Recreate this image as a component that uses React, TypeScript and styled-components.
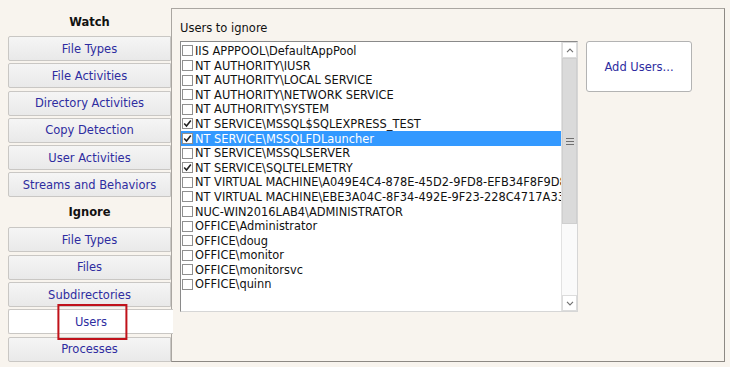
import React from "react";
import styled, { createGlobalStyle } from "styled-components";

const GlobalStyle = createGlobalStyle`
  html, body {
    margin: 0;
    padding: 0;
    background: #f8f4ee;
  }
  body {
    font-family: "DejaVu Sans", Verdana, sans-serif;
  }
`;

const Page = styled.div`
  display: flex;
  align-items: flex-start;
  padding: 8px 0 0 8px;
  width: 730px;
  height: 367px;
  box-sizing: border-box;
`;

const Nav = styled.nav`
  width: 163px;
  display: flex;
  flex-direction: column;
  flex-shrink: 0;
`;

const NavHeading = styled.div<{ $h: number }>`
  height: ${(p) => p.$h}px;
  display: flex;
  align-items: center;
  justify-content: center;
  font-weight: bold;
  font-size: 11.5px;
  color: #111;
`;

const TabList = styled.div`
  display: flex;
  flex-direction: column;
  gap: 2.3px;
`;

const Tab = styled.div<{ $active?: boolean }>`
  position: relative;
  height: 25px;
  box-sizing: border-box;
  display: flex;
  align-items: center;
  justify-content: center;
  font-size: 11.5px;
  color: #2e2ca0;
  border: 1px solid #c9c7c4;
  border-radius: 2px 0 0 2px;
  background: ${(p) =>
    p.$active ? "#ffffff" : "linear-gradient(#f5f5f5, #e9e9e9)"};
  ${(p) =>
    p.$active &&
    `
    border-right: none;
    margin-right: -2px;
    z-index: 1;
  `}
`;

const Annotation = styled.span`
  position: absolute;
  left: 50%;
  top: 50%;
  width: 70px;
  height: 36px;
  box-sizing: border-box;
  transform: translate(-48%, -50%);
  border: 2px solid #c0121a;
  pointer-events: none;
`;

const Panel = styled.section`
  width: 554px;
  height: 354px;
  box-sizing: border-box;
  border: 1px solid #aaa6a1;
  border-right-color: #8d8984;
  border-bottom-color: #8d8984;
  padding: 12px 0 0 8px;
  display: flex;
  flex-direction: column;
`;

const Label = styled.div`
  font-size: 11.5px;
  color: #111;
  height: 20px;
`;

const Body = styled.div`
  display: flex;
  align-items: flex-start;
  gap: 8px;
`;

const ListBox = styled.div`
  width: 398px;
  height: 271px;
  box-sizing: border-box;
  border: 1px solid #8a8a8a;
  border-right-color: #d6d6d6;
  border-bottom-color: #d6d6d6;
  background: #fff;
  display: flex;
`;

const Items = styled.div`
  flex: 1;
  overflow: hidden;
  padding-top: 1.7px;
`;

const Row = styled.div<{ $selected?: boolean }>`
  height: 14.6px;
  display: flex;
  align-items: center;
  gap: 2px;
  padding-left: 1px;
  white-space: nowrap;
  font-size: 11.4px;
  color: ${(p) => (p.$selected ? "#ffffff" : "#111")};
  background: ${(p) => (p.$selected ? "#3399ff" : "transparent")};
`;

const Check = styled.span`
  width: 11px;
  height: 11px;
  flex-shrink: 0;
  box-sizing: border-box;
  border: 1px solid #8f8f8f;
  background: #fff;
  display: flex;
  align-items: center;
  justify-content: center;
`;

const ScrollBar = styled.div`
  width: 16px;
  display: flex;
  flex-direction: column;
  background: #fafafa;
  border-left: 1px solid #e2e2e2;
  box-sizing: border-box;
`;

const Arrow = styled.div`
  height: 16px;
  box-sizing: border-box;
  border: 1px solid #dcdcdc;
  background: #fff;
  display: flex;
  align-items: center;
  justify-content: center;
`;

const Thumb = styled.div`
  height: 166px;
  background: #dadada;
  border: 1px solid #cfcfcf;
  box-sizing: border-box;
  display: flex;
  align-items: center;
  justify-content: center;
`;

const AddButton = styled.button`
  width: 106px;
  height: 51px;
  border: 1px solid #b3b3b3;
  border-radius: 3px;
  background: #fff;
  color: #2e2ca0;
  font-family: "DejaVu Sans", Verdana, sans-serif;
  font-size: 11.5px;
  padding: 0;
`;

type User = { name: string; checked?: boolean; selected?: boolean };

const users: User[] = [
  { name: "IIS APPPOOL\\DefaultAppPool" },
  { name: "NT AUTHORITY\\IUSR" },
  { name: "NT AUTHORITY\\LOCAL SERVICE" },
  { name: "NT AUTHORITY\\NETWORK SERVICE" },
  { name: "NT AUTHORITY\\SYSTEM" },
  { name: "NT SERVICE\\MSSQL$SQLEXPRESS_TEST", checked: true },
  { name: "NT SERVICE\\MSSQLFDLauncher", checked: true, selected: true },
  { name: "NT SERVICE\\MSSQLSERVER" },
  { name: "NT SERVICE\\SQLTELEMETRY", checked: true },
  { name: "NT VIRTUAL MACHINE\\A049E4C4-878E-45D2-9FD8-EFB34F8F9D86" },
  { name: "NT VIRTUAL MACHINE\\EBE3A04C-8F34-492E-9F23-228C4717A33B" },
  { name: "NUC-WIN2016LAB4\\ADMINISTRATOR" },
  { name: "OFFICE\\Administrator" },
  { name: "OFFICE\\doug" },
  { name: "OFFICE\\monitor" },
  { name: "OFFICE\\monitorsvc" },
  { name: "OFFICE\\quinn" },
];

const watchTabs = [
  "File Types",
  "File Activities",
  "Directory Activities",
  "Copy Detection",
  "User Activities",
  "Streams and Behaviors",
];

const ignoreTabs = ["File Types", "Files", "Subdirectories", "Users", "Processes"];

const Tick = () => (
  <svg width="9" height="9" viewBox="0 0 9 9">
    <polyline points="1.2,4.5 3.5,7 7.8,1.5" fill="none" stroke="#222" strokeWidth="1.6" />
  </svg>
);

const Chevron = ({ up }: { up?: boolean }) => (
  <svg width="8" height="5" viewBox="0 0 8 5">
    <polyline
      points={up ? "1,4.2 4,1 7,4.2" : "1,0.8 4,4 7,0.8"}
      fill="none"
      stroke="#707070"
      strokeWidth="1.1"
    />
  </svg>
);

const Grip = () => (
  <svg width="8" height="7" viewBox="0 0 8 7">
    <path d="M0 0.5H8M0 3.5H8M0 6.5H8" stroke="#707070" strokeWidth="1" />
  </svg>
);

export default function App() {
  return (
    <>
      <GlobalStyle />
      <Page>
        <Nav>
          <NavHeading $h={28}>Watch</NavHeading>
          <TabList>
            {watchTabs.map((t) => (
              <Tab key={t}>{t}</Tab>
            ))}
          </TabList>
          <NavHeading $h={30}>Ignore</NavHeading>
          <TabList>
            {ignoreTabs.map((t) => (
              <Tab key={t} $active={t === "Users"}>
                {t}
                {t === "Users" && <Annotation />}
              </Tab>
            ))}
          </TabList>
        </Nav>
        <Panel>
          <Label>Users to ignore</Label>
          <Body>
            <ListBox>
              <Items>
                {users.map((u) => (
                  <Row key={u.name} $selected={u.selected}>
                    <Check>{u.checked && <Tick />}</Check>
                    {u.name}
                  </Row>
                ))}
              </Items>
              <ScrollBar>
                <Arrow>
                  <Chevron up />
                </Arrow>
                <Thumb>
                  <Grip />
                </Thumb>
                <div style={{ flex: 1 }} />
                <Arrow>
                  <Chevron />
                </Arrow>
              </ScrollBar>
            </ListBox>
            <AddButton>Add Users...</AddButton>
          </Body>
        </Panel>
      </Page>
    </>
  );
}
